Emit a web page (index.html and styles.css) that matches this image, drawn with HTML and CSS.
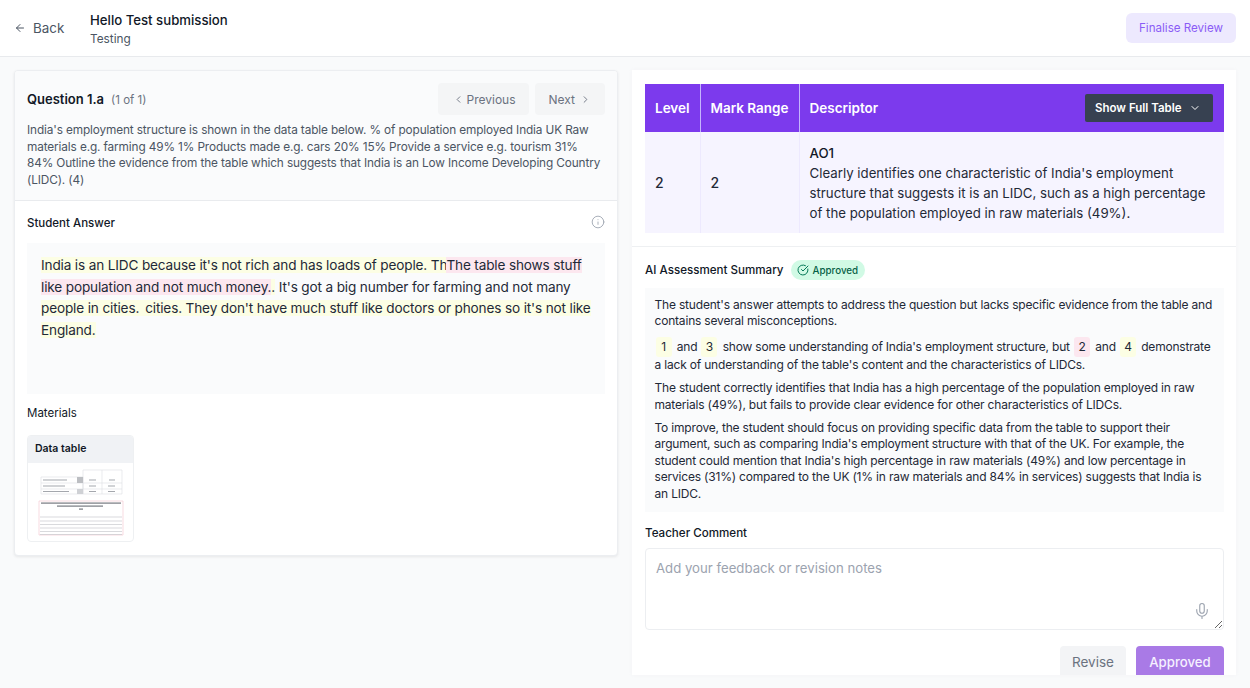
FILE: index.html
```html
<!DOCTYPE html>
<html lang="en">
<head>
<meta charset="utf-8">
<title>Review</title>
<link rel="stylesheet" href="styles.css">
</head>
<body>
<header class="topbar">
  <a class="back"><svg class="ico" viewBox="0 0 24 24" width="12" height="12"><path d="M19 12H5M12 19l-7-7 7-7"/></svg><span>Back</span></a>
  <div class="titles"><div class="title">Hello Test submission</div><div class="sub">Testing</div></div>
  <button class="finalise">Finalise Review</button>
</header>
<main class="main">
  <section class="left">
    <div class="q-block">
      <div class="q-head">
        <div class="q-title"><strong>Question 1.a</strong><span>(1 of 1)</span></div>
        <div class="q-nav">
          <button class="nav prev"><svg class="ico" viewBox="0 0 24 24" width="11" height="11"><path d="M15 18l-6-6 6-6"/></svg>Previous</button>
          <button class="nav next">Next<svg class="ico" viewBox="0 0 24 24" width="11" height="11"><path d="M9 18l6-6-6-6"/></svg></button>
        </div>
      </div>
      <p class="q-text">India's employment structure is shown in the data table below. % of population employed India UK Raw materials e.g. farming 49% 1% Products made e.g. cars 20% 15% Provide a service e.g. tourism 31% 84% Outline the evidence from the table which suggests that India is an Low Income Developing Country (LIDC). (4)</p>
    </div>
    <div class="a-block">
      <div class="a-head"><h3>Student Answer</h3><svg class="info" viewBox="0 0 24 24" width="14" height="14"><circle cx="12" cy="12" r="10"/><path d="M12 16v-4M12 8h.01"/></svg></div>
      <div class="answer"><span class="y">India is an LIDC because it's not rich and has loads of people. Th</span><span class="p">The table shows stuff like population and not much money.</span><span class="y">.</span> It's got a big number for farming and not many <span class="y">people in cities.&thinsp; cities. They don't have much stuff like doctors or phones so it's not like England.</span></div>
      <h4 class="mat">Materials</h4>
      <div class="thumb">
        <div class="thumb-head">Data table</div>
        <div class="thumb-body">
          <svg viewBox="0 0 107 80" width="107" height="80">
            <g fill="none" stroke="#dcdee2" stroke-width=".6">
              <path d="M56 7h39v24H56zM14 14h42v17H14zM14 20h81M14 26h81M75 7v24"/>
            </g>
            <rect x="50" y="14" width="6" height="6" fill="#bcbec2"/>
            <rect x="50" y="26" width="6" height="5" fill="#cfd1d5"/>
            <g fill="#a4a7ad"><rect x="16" y="16.500" width="24" height="1"/><rect x="16" y="22.500" width="22" height="1"/><rect x="16" y="28" width="26" height="1"/><rect x="62" y="16.500" width="7" height="1"/><rect x="82" y="16.500" width="6" height="1"/><rect x="62" y="22.500" width="7" height="1"/><rect x="81" y="22.500" width="7" height="1"/><rect x="62" y="28" width="7" height="1"/><rect x="81" y="28" width="7" height="1"/></g>
            <path d="M12 38h84v34H12z" fill="none" stroke="#f3c4cc" stroke-width=".6"/>
            <g fill="#777a80"><rect x="14" y="39.500" width="80" height="1.200"/><rect x="30" y="42.500" width="46" height="1.200"/><rect x="52" y="45.500" width="4" height="1.200"/></g>
            <path d="M13 54h82M13 58h82M13 61.500h82M13 65h82M13 68.500h82M13 71.500h82" stroke="#bfc1c6" stroke-width=".6"/>
          </svg>
        </div>
      </div>
    </div>
  </section>
  <section class="right">
    <table class="marks">
      <thead><tr><th class="c1">Level</th><th class="c2">Mark Range</th><th class="c3"><div class="desc-head"><span>Descriptor</span><button class="show">Show Full Table<svg class="ico" viewBox="0 0 24 24" width="12" height="12"><path d="M6 9l6 6 6-6"/></svg></button></div></th></tr></thead>
      <tbody><tr><td>2</td><td>2</td><td class="desc"><b>AO1</b><br>Clearly identifies one characteristic of India's employment structure that suggests it is an LIDC, such as a high percentage of the population employed in raw materials (49%).</td></tr></tbody>
    </table>
    <hr class="rule">
    <div class="sum-head"><h3>AI Assessment Summary</h3><span class="badge"><svg viewBox="0 0 24 24" width="12" height="12"><path d="M21.800 10A10 10 0 1 1 17 3.300"/><path d="M9 11l3 3L22 4"/></svg>Approved</span></div>
    <div class="summary">
      <p>The student's answer attempts to address the question but lacks specific evidence from the table and contains several misconceptions.</p>
      <p><span class="n ny">1</span> and <span class="n ny">3</span> show some understanding of India's employment structure, but <span class="n np">2</span> and <span class="n ny">4</span> demonstrate a lack of understanding of the table's content and the characteristics of LIDCs.</p>
      <p>The student correctly identifies that India has a high percentage of the population employed in raw materials (49%), but fails to provide clear evidence for other characteristics of LIDCs.</p>
      <p>To improve, the student should focus on providing specific data from the table to support their argument, such as comparing India's employment structure with that of the UK. For example, the student could mention that India's high percentage in raw materials (49%) and low percentage in services (31%) compared to the UK (1% in raw materials and 84% in services) suggests that India is an LIDC.</p>
    </div>
    <h3 class="tc">Teacher Comment</h3>
    <div class="comment">
      <textarea placeholder="Add your feedback or revision notes"></textarea>
      <svg class="mic" viewBox="0 0 24 24" width="18" height="18"><rect x="9" y="2" width="6" height="13" rx="3"/><path d="M19 10v2a7 7 0 0 1-14 0v-2M12 19v3"/></svg>
    </div>
    <div class="actions"><button class="revise">Revise</button><button class="approved">Approved</button></div>
  </section>
</main>
</body>
</html>
```
FILE: styles.css
```css
* { box-sizing: border-box; }
html, body { margin: 0; height: 100%; overflow: hidden; }
body { background: #f9fafb; font-family: Inter, "Liberation Sans", sans-serif; color: #111827; width: 1250px; height: 688px; }
h3, h4, p { margin: 0; }
button { font-family: inherit; border: 0; white-space: nowrap; }
.ico { fill: none; stroke: currentColor; stroke-width: 2; stroke-linecap: round; stroke-linejoin: round; flex: none; }

.topbar { height: 57px; background: #fff; border-bottom: 1px solid #e8eaed; display: flex; align-items: center; padding: 0 14px 0 14px; }
.back { display: flex; align-items: center; gap: 7px; font-size: 13.400px; color: #4b5563; width: 76px; }
.titles { flex: 1; padding-top: 3px; }
.title { font-size: 13.200px; font-weight: 500; line-height: 19px; color: #111827; }
.sub { font-size: 11.800px; line-height: 18px; color: #4b5563; }
.finalise { height: 30px; width: 110px; border-radius: 6px; background: #ede9fe; color: #8b5cf6; font-size: 11.600px; font-weight: 400; }

.main { display: flex; gap: 14px; padding: 13px 14px 0; align-items: flex-start; }
.left { width: 604px; background: #fff; border: 1px solid #eceef1; border-radius: 4px; box-shadow: 0 1px 3px rgba(0,0,0,.08); height: 486px; overflow: hidden; }
.q-block { background: #fafbfc; border-bottom: 1px solid #e9ebee; height: 130px; padding: 12px 12px 0 12px; }
.q-head { display: flex; justify-content: space-between; align-items: center; height: 32px; }
.q-title { display: flex; align-items: baseline; gap: 7px; }
.q-title strong { font-size: 13px; font-weight: 600; }
.q-title span { font-size: 11.500px; color: #6b7280; }
.q-nav { display: flex; gap: 6px; }
.nav { display: flex; align-items: center; height: 32px; border-radius: 4px; background: #f4f5f6; color: #6b7280; font-size: 12px; }
.nav.prev { gap: 2px; padding: 0 13px 0 15px; }
.nav.next { gap: 5px; padding: 0 14px; }
.q-text { font-size: 11.800px; letter-spacing: -.12px; line-height: 16.600px; color: #4b5563; margin-top: 7px; }

.a-block { padding: 0 12px; }
.a-head { display: flex; justify-content: space-between; align-items: center; height: 42px; }
.a-head h3 { font-size: 11.500px; font-weight: 500; padding-top: 1px; }
.info { fill: none; stroke: #9ca3af; stroke-width: 1.500; stroke-linecap: round; }
.answer { background: #fafbfc; height: 151px; padding: 12px 12px 0 14px; font-size: 13.600px; letter-spacing: -.15px; line-height: 21.500px; color: #1f2937; }
.y { background: #fcfee4; }
.p { background: #fce7ef; }
.mat { font-size: 11.500px; font-weight: 400; margin-top: 11px; line-height: 16px; }
.thumb { width: 107px; height: 107px; margin-top: 14px; border: 1px solid #eef0f2; border-radius: 4px; overflow: hidden; background: #fff; }
.thumb-head { background: #f0f2f5; height: 27px; padding: 0 7px; font-size: 10.500px; font-weight: 600; line-height: 26px; }
.thumb-body svg { display: block; margin-left: -1px; }

.right { width: 604px; height: 605px; background: #fff; padding: 14px 12px 0 13px; overflow: hidden; box-shadow: 0 0 3px rgba(243,244,246,.8); }
.marks { width: 579px; border-collapse: collapse; table-layout: fixed; }
.marks th { background: #7c3aed; color: #fff; font-weight: 600; font-size: 13.500px; text-align: left; height: 48px; padding: 0 9px 0 10px; border-left: 1px solid #c4b5fd; white-space: nowrap; }
.marks th:first-child { border-left: 0; }
.c1 { width: 55px; } .c2 { width: 99px; }
.desc-head { display: flex; justify-content: space-between; align-items: center; padding-right: 2px; }
.show { display: flex; align-items: center; gap: 7px; height: 28px; width: 128px; padding: 0 10px; border-radius: 2px; background: #374151; color: #fff; font-size: 11.500px; font-weight: 600; }
.marks td { background: #f6f4ff; height: 101px; padding: 0 9px 0 10px; border-left: 1px solid #ede9fe; color: #1f2937; font-size: 14px; line-height: 20px; vertical-align: middle; font-weight: 500; }
.marks td:first-child { border-left: 0; }
.marks td.desc { font-weight: 400; font-size: 13.250px; }
.marks td.desc b { font-weight: 500; color: #111827; }
.rule { border: 0; border-top: 1px solid #eef0f2; margin: 13px -12px 0 -13px; }
.sum-head { display: flex; align-items: center; gap: 7px; margin-top: 13px; height: 20px; }
.sum-head h3, .tc { font-size: 11.600px; font-weight: 500; }
.badge { display: flex; align-items: center; gap: 4px; height: 20px; padding: 0 7px 0 6px; border-radius: 10px; background: #d1fae5; color: #065f46; font-size: 9.800px; font-weight: 500; }
.badge svg { fill: none; stroke: #047857; stroke-width: 2; stroke-linecap: round; stroke-linejoin: round; }
.summary { background: #fafbfc; margin-top: 8px; height: 224px; padding: 9px 8px 0 9.500px; font-size: 12px; letter-spacing: -.19px; line-height: 16.400px; color: #1f2937; }
.summary p { margin-bottom: 7px; }
.n { display: inline-block; min-width: 16px; padding: 2px 0; margin: 0 2px 0 1px; text-align: center; border-radius: 3px; line-height: 16px; }
.ny { background: #fcfee4; }
.np { background: #fce7ef; }
.tc { margin-top: 14px; line-height: 14px; }
.comment { position: relative; margin-top: 8px; }
.comment textarea { display: block; width: 579px; height: 82px; padding: 10px 10px; background: #fff; border: 1px solid #eceef1; border-radius: 4px; font-family: inherit; font-size: 13.200px; line-height: 18px; outline: 0; }
.comment textarea::placeholder { color: #9ca3af; }
.mic { position: absolute; right: 13px; bottom: 10px; fill: none; stroke: #9ca3af; stroke-width: 1.500; stroke-linecap: round; }
.actions { display: flex; justify-content: flex-end; gap: 10px; margin-top: 16px; }
.revise { width: 66px; height: 32px; border-radius: 4px; background: #f3f4f6; color: #6b7280; font-size: 13.500px; }
.approved { width: 88px; height: 32px; border-radius: 4px; background: #a97ae6; color: #f5f0ff; font-size: 13.200px; font-weight: 500; }
```
